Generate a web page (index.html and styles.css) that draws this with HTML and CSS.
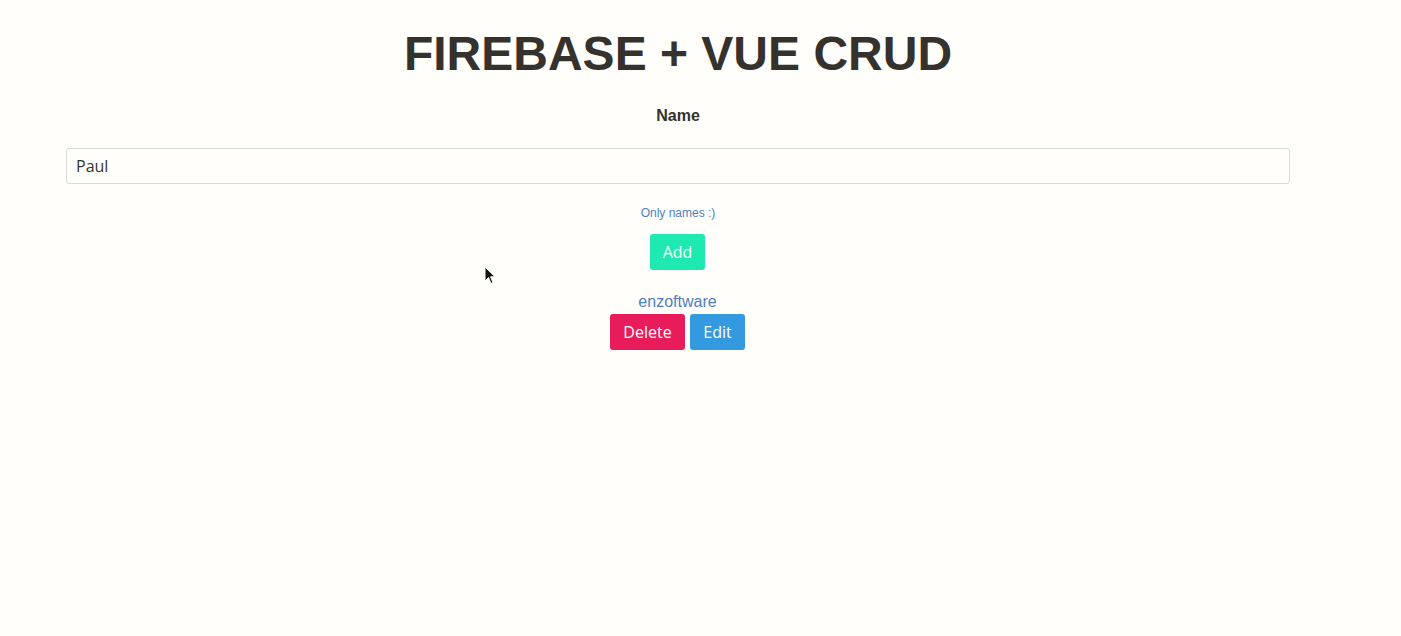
FILE: index.html
```html
<!DOCTYPE html>
<html>
<head>
<meta charset="utf-8">
<link rel="stylesheet" href="styles.css">
</head>
<body>
<div class="app">
  <h1 class="title">FIREBASE + VUE CRUD</h1>
  <label class="label">Name</label>
  <input class="field" type="text" value="Paul">
  <p class="hint">Only names :)</p>
  <div class="row"><button class="btn add">Add</button></div>
  <ul class="list">
    <li class="item">
      <span class="item-name">enzoftware</span>
      <div class="actions">
        <button class="btn delete">Delete</button>
        <button class="btn edit">Edit</button>
      </div>
    </li>
  </ul>
</div>
<svg class="cursor" width="12" height="19" viewBox="0 0 12 19"><path d="M1 1 L1 15 L4.5 11.5 L7 17.5 L9 16.6 L6.6 10.8 L11 10.8 Z" fill="#111" stroke="#fff" stroke-width="1"/></svg>
</body>
</html>
```
FILE: styles.css
```css
html, body {
  margin: 0;
  padding: 0;
  background: #fffefa;
}
body {
  font-family: "Liberation Sans", Arial, sans-serif;
  color: #35322d;
  position: relative;
  min-height: 636px;
}
.app {
  width: 1224px;
  margin-left: 66px;
  display: flex;
  flex-direction: column;
  align-items: center;
  padding-top: 26px;
}
.title {
  font-size: 48px;
  font-weight: bold;
  margin: 0;
  line-height: 55px;
}
.label {
  font-size: 16px;
  font-weight: bold;
  margin-top: 26px;
  line-height: 18px;
}
.field {
  width: 100%;
  box-sizing: border-box;
  height: 36px;
  margin-top: 23px;
  border: 1px solid #dcdad5;
  border-radius: 3px;
  background: #fffefa;
  font-family: "Open Sans", "Noto Sans", sans-serif;
  font-size: 16px;
  color: #333;
  padding: 0 9px;
  outline: none;
}
.hint {
  font-size: 12px;
  color: #4f7ec0;
  margin: 22px 0 0;
  line-height: 14px;
}
.row {
  margin-top: 14px;
  margin-right: 1px;
}
.btn {
  border: none;
  border-radius: 3px;
  height: 36px;
  color: #fff;
  font-family: "Open Sans", "Noto Sans", sans-serif;
  font-size: 16px;
  padding: 0 13px;
  cursor: pointer;
}
.add {
  background: #1de9b0;
  width: 55px;
  padding: 0;
}
.list {
  list-style: none;
  margin: 23px 1px 0 0;
  padding: 0;
}
.item {
  display: flex;
  flex-direction: column;
  align-items: center;
}
.item-name {
  font-size: 16px;
  color: #4f7ec0;
  line-height: 18px;
}
.actions {
  display: flex;
  gap: 5px;
  margin-top: 3px;
}
.delete {
  background: #e91c5b;
  width: 75px;
  padding: 0;
}
.edit {
  background: #339adf;
  width: 55px;
  padding: 0;
}
.cursor {
  position: absolute;
  left: 484px;
  top: 266px;
}
```
